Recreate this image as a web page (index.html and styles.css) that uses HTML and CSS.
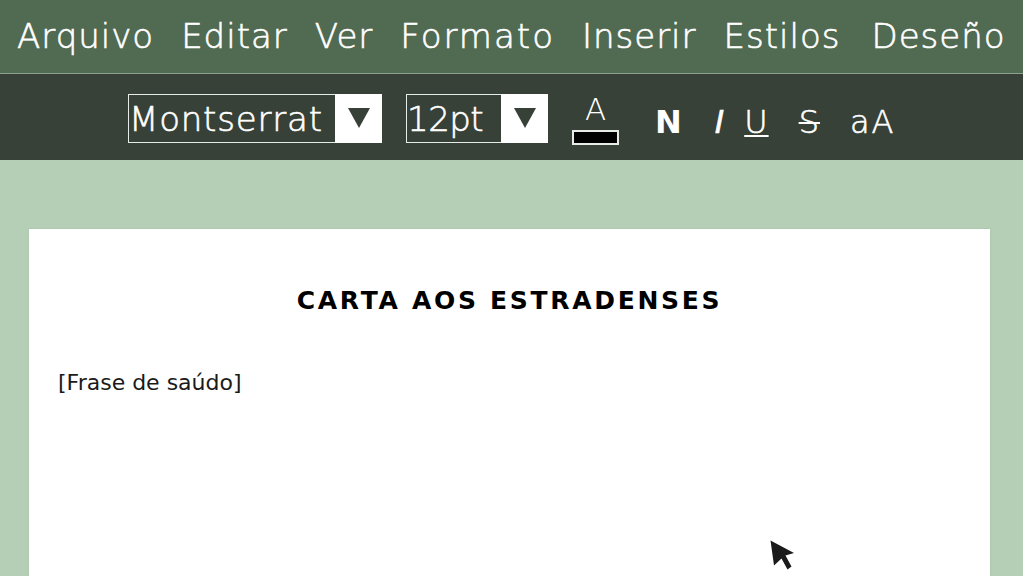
FILE: index.html
```html
<!DOCTYPE html>
<html lang="gl">
<head>
<meta charset="utf-8">
<title>Carta aos estradenses</title>
<link rel="stylesheet" href="styles.css">
</head>
<body>
<div class="app">
  <nav class="menubar">
    <span class="menu-item">Arquivo</span>
    <span class="menu-item">Editar</span>
    <span class="menu-item">Ver</span>
    <span class="menu-item menu-wide">Formato</span>
    <span class="menu-item">Inserir</span>
    <span class="menu-item">Estilos</span>
    <span class="menu-item menu-last">Deseño</span>
  </nav>
  <div class="toolbar">
    <div class="select select-font">
      <span class="select-value">Montserrat</span>
      <span class="select-btn"><svg width="22" height="20" viewBox="0 0 22 20"><polygon points="0,0 22,0 11,20" fill="#374137"/></svg></span>
    </div>
    <div class="select select-size">
      <span class="select-value">12pt</span>
      <span class="select-btn"><svg width="22" height="20" viewBox="0 0 22 20"><polygon points="0,0 22,0 11,20" fill="#374137"/></svg></span>
    </div>
    <div class="color-tool">
      <span class="color-letter">A</span>
      <span class="color-swatch"></span>
    </div>
    <span class="tool tool-bold">N</span>
    <span class="tool tool-italic">I</span>
    <span class="tool tool-underline">U</span>
    <span class="tool tool-strike">S</span>
    <span class="tool tool-case">aA</span>
  </div>
  <main class="canvas">
    <article class="page">
      <h1 class="page-title">CARTA AOS ESTRADENSES</h1>
      <p class="page-text">[Frase de saúdo]</p>
    </article>
    <svg class="cursor" width="25" height="31" viewBox="0 0 25 31"><polygon points="0.5,0.5 24,13 15.5,15.5 21.5,26.5 17.5,29.5 11.5,18.5 4,25.5" fill="#1a1a1a"/></svg>
  </main>
</div>
</body>
</html>
```
FILE: styles.css
```css
* { box-sizing: border-box; }
html, body { margin: 0; padding: 0; }
body {
  width: 1023px;
  height: 576px;
  overflow: hidden;
  font-family: "DejaVu Sans", "Noto Sans", sans-serif;
  background: #b5cfb7;
}
.app { display: flex; flex-direction: column; height: 576px; }

.menubar {
  height: 74px;
  background: #516a52;
  border-bottom: 1px solid #8ea08e;
  display: flex;
  align-items: center;
  padding: 0 0 1px 17px;
  gap: 27px;
  color: #ffffff;
}
.menu-item {
  font-size: 34px;
  font-weight: 200;
  -webkit-text-stroke: 0.6px #ffffff;
  letter-spacing: 1px;
  line-height: 1;
  white-space: nowrap;
}
.menu-wide { letter-spacing: 2px; }
.menu-last { margin-left: 4px; }

.toolbar {
  height: 86px;
  background: #374137;
  display: flex;
  align-items: center;
  justify-content: flex-start;
  color: #ffffff;
  padding-left: 128px;
}
.select {
  height: 49px;
  display: flex;
  border: 1px solid #e8ece8;
  margin-top: 2px;
}
.select-font { width: 254px; }
.select-size { width: 142px; margin-left: 24px; }
.select-value {
  flex: 1;
  font-size: 34px;
  font-weight: 200;
  -webkit-text-stroke: 0.6px #ffffff;
  letter-spacing: 0.8px;
  line-height: 49px;
  padding-left: 0;
  white-space: nowrap;
}
.select-size .select-value { letter-spacing: -0.5px; }
.select-btn {
  width: 47px;
  flex: none;
  background: #ffffff;
  display: flex;
  align-items: center;
  justify-content: center;
  margin: -1px -1px -1px 0;
}
.color-tool {
  width: 47px;
  margin-left: 24px;
  display: flex;
  flex-direction: column;
  align-items: center;
  margin-top: 2px;
}
.color-letter {
  font-size: 31px;
  font-weight: 200;
  line-height: 34px;
}
.color-swatch {
  width: 47px;
  height: 15px;
  margin-top: 4px;
  background: #000000;
  border: 2px solid #e8ece8;
}
.tool {
  font-size: 32px;
  font-weight: 200;
  -webkit-text-stroke: 0.6px #ffffff;
  line-height: 1;
  margin-top: 10px;
}
.tool-bold { font-weight: 700; -webkit-text-stroke: 0; margin-left: 36px; }
.tool-italic { font-style: italic; margin-left: 33px; }
.tool-underline { text-decoration: underline; text-decoration-thickness: 2px; text-underline-offset: 2px; margin-left: 20px; letter-spacing: 1px; }
.tool-strike { text-decoration: line-through; text-decoration-thickness: 2px; margin-left: 30px; letter-spacing: 1px; }
.tool-case { margin-left: 30px; letter-spacing: 2px; }

.canvas {
  flex: 1;
  position: relative;
  padding: 69px 33px 0 29px;
  overflow: hidden;
}
.page {
  background: #ffffff;
  height: 400px;
  padding: 56px 29px 0 29px;
  box-shadow: 0 0 2px rgba(0,0,0,0.08);
}
.page-title {
  margin: 0;
  text-align: center;
  font-size: 25px;
  font-weight: 700;
  letter-spacing: 2.7px;
  color: #000000;
  line-height: 32px;
}
.page-text {
  margin: 52px 0 0 0;
  font-size: 22px;
  color: #1a1a1a;
  line-height: 28px;
}
.cursor {
  position: absolute;
  left: 770px;
  top: 380px;
}
```
